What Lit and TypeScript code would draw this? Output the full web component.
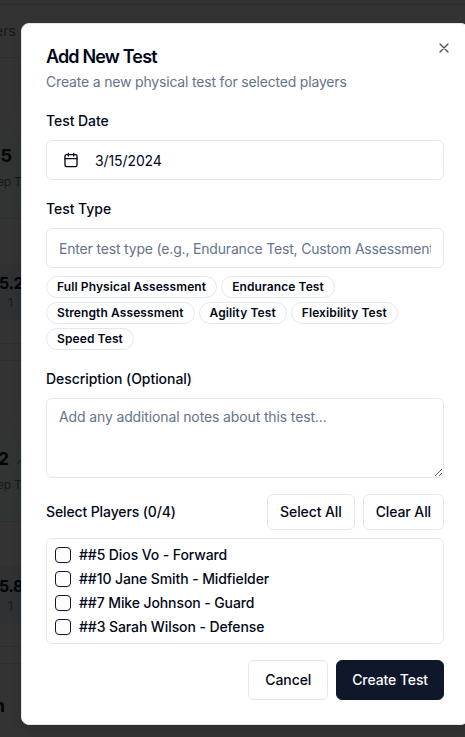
import { LitElement, html, css, svg } from "lit";
import { customElement, state } from "lit/decorators.js";

const TYPES = [
  "Full Physical Assessment",
  "Endurance Test",
  "Strength Assessment",
  "Agility Test",
  "Flexibility Test",
  "Speed Test",
];

const PLAYERS = [
  "##5 Dios Vo - Forward",
  "##10 Jane Smith - Midfielder",
  "##7 Mike Johnson - Guard",
  "##3 Sarah Wilson - Defense",
];

@customElement("dimmed-page")
class DimmedPage extends LitElement {
  static styles = css`
    :host {
      display: block;
      height: 737px;
      overflow: hidden;
      background: #333333;
      color: #020408;
    }
    div {
      box-sizing: border-box;
      white-space: nowrap;
    }
    .top { height: 5px; border-bottom: 1px solid #2d2e2f; }
    .nav {
      height: 53px;
      border-bottom: 1px solid #2d2e2f;
      font-size: 14px;
      line-height: 52px;
      color: #16191d;
      width: 100%;
      text-indent: -5px;
    }
    .stat {
      height: 161px;
      padding-top: 84px;
      border-bottom: 1px solid #2d2e2f;
      background: linear-gradient(#333333 20%, #303432);
    }
    .stat.second { padding-top: 84px; }
    .value {
      width: 12px;
      display: flex;
      justify-content: flex-end;
      font-size: 18px;
      font-weight: 700;
      line-height: 28px;
    }
    .stat.second .value { width: 9px; }
    .trend { position: absolute; left: 17px; top: 454px; }
    .note {
      font-size: 12px;
      line-height: 24px;
      color: #16191d;
      text-indent: -3px;
      letter-spacing: -0.2px;
    }
    .record { height: 125px; padding-top: 44px; border-bottom: 1px solid #2d2e2f; }
    .band {
      height: 57px;
      padding-top: 6px;
      background: #303132;
    }
    .score {
      font-size: 16px;
      font-weight: 700;
      line-height: 28px;
      text-indent: -1px;
      letter-spacing: -0.4px;
    }
    .count {
      font-size: 12px;
      line-height: 12px;
      color: #16191d;
      text-indent: 8px;
    }
    .gap { height: 17px; border-bottom: 1px solid #2d2e2f; }
    .heading {
      width: 5px;
      height: 73px;
      padding-top: 28px;
      display: flex;
      justify-content: flex-end;
      font-size: 18px;
      font-weight: 700;
      line-height: 28px;
    }
  `;

  render() {
    return html`
      <div class="top"></div>
      <div class="nav">ers</div>
      <div class="stat">
        <div class="value">.5</div>
        <div class="note">ep Test</div>
      </div>
      <div class="record">
        <div class="band">
          <div class="score">5.2</div>
          <div class="count">1</div>
        </div>
      </div>
      <div class="gap"></div>
      <div class="stat second">
        <div class="value">2</div>
        <div class="note">ep Test</div>
      </div>
      <svg class="trend" width="12" height="12" viewBox="0 0 12 12" fill="none" stroke="#063619" stroke-width="1.5">
        <path d="M0 10L4 6L7 8L12 2" />
      </svg>
      <div class="record">
        <div class="band">
          <div class="score">5.8</div>
          <div class="count">1</div>
        </div>
      </div>
      <div class="gap"></div>
      <div class="heading">n</div>
    `;
  }
}

@customElement("app-root")
class AppRoot extends LitElement {
  @state() private selected = new Set<number>();

  static styles = css`
    :host {
      display: block;
      position: relative;
      width: 465px;
      height: 737px;
      overflow: hidden;
      font-family: Inter, sans-serif;
      font-size: 16px;
      line-height: 24px;
      color: #020817;
    }
    * { box-sizing: border-box; }
    .dialog {
      position: absolute;
      left: 21px;
      top: 23px;
      width: 448px;
      height: 702px;
      padding: 24px;
      border: 1px solid #e2e8f0;
      border-radius: 8px;
      background: #fff;
      box-shadow: 0 10px 15px -3px rgba(0, 0, 0, 0.1), 0 4px 6px -4px rgba(0, 0, 0, 0.1);
      display: flex;
      flex-direction: column;
      gap: 16px;
    }
    .close {
      position: absolute;
      right: 16px;
      top: 16px;
      width: 16px;
      height: 16px;
      padding: 0;
      border: 0;
      background: none;
      color: #020817;
      opacity: 0.7;
    }
    svg { display: block; }
    header { display: flex; flex-direction: column; gap: 6px; }
    h2 {
      margin: 0;
      font-size: 18px;
      font-weight: 600;
      line-height: 18px;
      letter-spacing: -0.85px;
    }
    .subtitle { margin: 0; font-size: 14px; line-height: 20px; letter-spacing: -0.18px; color: #64748b; }
    .field { display: flex; flex-direction: column; gap: 8px; }
    .label { font-size: 14px; font-weight: 500; line-height: 26px; height: 24px; letter-spacing: -0.05px; }
    button, input, textarea { font-family: inherit; color: inherit; }
    .date, .input {
      width: 100%;
      height: 40px;
      border: 1px solid #e2e8f0;
      border-radius: 6px;
      background: #fff;
      font-size: 14px;
    }
    .date {
      display: flex;
      align-items: center;
      gap: 16px;
      padding: 0 16px;
      font-weight: 400;
      letter-spacing: -0.1px;
    }
    .input { padding: 8px 12px; letter-spacing: -0.18px; }
    .notes {
      display: block;
      width: 100%;
      height: 80px;
      margin: 0;
      padding: 8px 12px;
      border: 1px solid #e2e8f0;
      border-radius: 6px;
      background: #fff;
      font-size: 14px;
      line-height: 20px;
      letter-spacing: -0.13px;
      resize: vertical;
    }
    ::placeholder { color: #64748b; opacity: 1; }
    .types { display: flex; flex-wrap: wrap; gap: 4px; }
    .type {
      height: 22px;
      padding: 2px 10px;
      border: 1px solid #e2e8f0;
      border-radius: 11px;
      font-size: 12px;
      font-weight: 600;
      line-height: 16px;
      letter-spacing: 0.1px;
      white-space: nowrap;
    }
    .bar { display: flex; align-items: center; justify-content: space-between; }
    .bar .label { line-height: 24px; letter-spacing: -0.12px; }
    .actions { display: flex; gap: 8px; justify-content: flex-end; }
    .button {
      height: 40px;
      padding: 0 16px;
      border: 1px solid #e2e8f0;
      border-radius: 6px;
      background: #fff;
      font-size: 14px;
      font-weight: 500;
      line-height: 20px;
      letter-spacing: -0.1px;
      white-space: nowrap;
    }
    .small { height: 36px; padding: 0 12px; }
    .primary { border-color: #0f172a; background: #0f172a; color: #f8fafc; padding: 0 15px; }
    .players {
      height: 106px;
      padding: 8px;
      border: 1px solid #e2e8f0;
      border-radius: 6px;
      display: flex;
      flex-direction: column;
      gap: 8px;
    }
    .player {
      display: flex;
      align-items: center;
      gap: 8px;
      height: 16px;
      font-size: 14px;
      font-weight: 500;
      line-height: 16px;
      letter-spacing: -0.1px;
    }
    .check {
      width: 16px;
      height: 16px;
      margin: 0;
      appearance: none;
      border: 1px solid #0f172a;
      border-radius: 4px;
    }
    .check:checked { background: #0f172a; }
  `;

  private toggle(i: number) {
    const next = new Set(this.selected);
    next.has(i) ? next.delete(i) : next.add(i);
    this.selected = next;
  }

  render() {
    const x = svg`<path d="M18 6 6 18M6 6l12 12" />`;
    return html`
      <dimmed-page></dimmed-page>
      <section class="dialog">
        <header>
          <h2>Add New Test</h2>
          <p class="subtitle">Create a new physical test for selected players</p>
        </header>
        <div class="field">
          <div class="label">Test Date</div>
          <button class="date">
            <svg width="16" height="16" viewBox="0 0 24 24" fill="none" stroke="currentColor" stroke-width="2" stroke-linecap="round" stroke-linejoin="round">
              <path d="M8 2v4M16 2v4M3 10h18" />
              <rect x="3" y="4" width="18" height="18" rx="2" />
            </svg>
            <span>3/15/2024</span>
          </button>
        </div>
        <div class="field">
          <div class="label">Test Type</div>
          <input class="input" placeholder="Enter test type (e.g., Endurance Test, Custom Assessment)" />
          <div class="types">${TYPES.map((t) => html`<div class="type">${t}</div>`)}</div>
        </div>
        <div class="field">
          <div class="label">Description (Optional)</div>
          <textarea class="notes" placeholder="Add any additional notes about this test..."></textarea>
        </div>
        <div class="field">
          <div class="bar">
            <div class="label">Select Players (${this.selected.size}/${PLAYERS.length})</div>
            <div class="actions">
              <button class="button small" @click=${() => (this.selected = new Set(PLAYERS.keys()))}>Select All</button>
              <button class="button small" @click=${() => (this.selected = new Set())}>Clear All</button>
            </div>
          </div>
          <div class="players">
            ${PLAYERS.map(
              (p, i) => html`<label class="player">
                <input class="check" type="checkbox" .checked=${this.selected.has(i)} @change=${() => this.toggle(i)} />
                <span>${p}</span>
              </label>`
            )}
          </div>
        </div>
        <div class="actions">
          <button class="button">Cancel</button>
          <button class="button primary">Create Test</button>
        </div>
        <button class="close" aria-label="Close">
          <svg width="16" height="16" viewBox="0 0 24 24" fill="none" stroke="currentColor" stroke-width="2" stroke-linecap="round">${x}</svg>
        </button>
      </section>
    `;
  }
}
